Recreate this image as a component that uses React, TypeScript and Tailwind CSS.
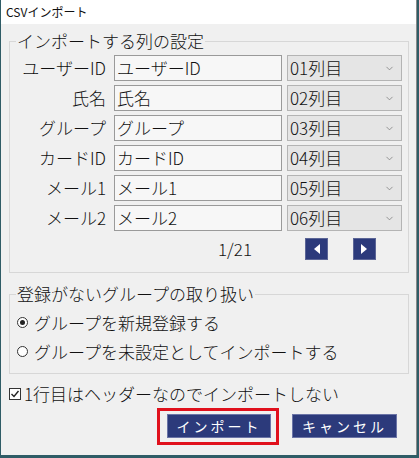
import { ChevronDown } from 'lucide-react';

const jp = "font-['Noto_Sans_CJK_JP','Noto_Sans',sans-serif]";

const rows = [
  { label: 'ユーザーID', col: '01列目' },
  { label: '氏名', col: '02列目' },
  { label: 'グループ', col: '03列目' },
  { label: 'カードID', col: '04列目' },
  { label: 'メール1', col: '05列目' },
  { label: 'メール2', col: '06列目' },
];

const NavButton = ({ dir }: { dir: 'left' | 'right' }) => (
  <button className="flex h-[22px] w-[23px] items-center justify-center border border-[#5b6596] bg-[#2c3a7b]">
    <svg width="7" height="10" viewBox="0 0 7 10">
      {dir === 'left' ? <polygon points="7,0 7,10 1,5" fill="#fff" /> : <polygon points="0,0 0,10 6,5" fill="#fff" />}
    </svg>
  </button>
);

const Radio = ({ checked, label }: { checked?: boolean; label: string }) => (
  <label className="flex h-[29px] items-center">
    <span className="ml-[7px] flex h-[11px] w-[11px] items-center justify-center rounded-full border border-[#333] bg-white">
      {checked && <span className="h-[5px] w-[5px] rounded-full bg-[#222]" />}
    </span>
    <span className="ml-[6px] text-[17px] leading-[20px]">{label}</span>
  </label>
);

export default function App() {
  return (
    <div className={`h-[458px] w-[419px] bg-[#2f5c66] font-light ${jp}`}>
      <div className="ml-[1px] flex h-[455px] w-[416px] flex-col overflow-hidden border-r border-[#8a8a8a] bg-[#f0f0f0] text-[#111]">
        <div className="flex h-[24px] items-center bg-white pl-[5px] text-[12px] font-normal leading-[14px]">CSVインポート</div>
        <div className="flex flex-col pl-[8px] pr-[7px]">
          <fieldset className="mt-[7px] border border-[#d7d7d7] pb-[12px]">
            <legend className="ml-[6px] px-[1px] text-[17px] leading-[20px]">インポートする列の設定</legend>
            <div className="flex flex-col gap-[4px] pt-[4px]">
              {rows.map((r) => (
                <div key={r.label} className="flex h-[26px] items-center">
                  <div className="w-[96px] text-right text-[17px] leading-[20px]">{r.label}</div>
                  <div className="ml-[8px] flex h-[26px] w-[168px] items-center border border-[#9a9a9a] bg-[#f7f7f7] pl-[2px] text-[17px] leading-[20px]">
                    {r.label}
                  </div>
                  <div className="ml-[5px] flex h-[26px] w-[115px] items-center justify-between border border-[#b4b4b4] bg-[#e5e5e5] pl-[2px] pr-[6px] text-[17px] leading-[20px]">
                    <span>{r.col}</span>
                    <ChevronDown size={11} strokeWidth={1.5} className="text-[#707070]" />
                  </div>
                </div>
              ))}
            </div>
            <div className="mt-[7px] flex h-[22px] items-center">
              <div className="ml-[208px] w-[87px] text-[17px] leading-[20px]">1/21</div>
              <NavButton dir="left" />
              <div className="ml-[25px]">
                <NavButton dir="right" />
              </div>
            </div>
          </fieldset>

          <fieldset className="mt-[11px] border border-[#d7d7d7] pb-[7px]">
            <legend className="ml-[6px] px-[1px] text-[17px] leading-[20px]">登録がないグループの取り扱い</legend>
            <div className="flex flex-col pt-[4px]">
              <Radio checked label="グループを新規登録する" />
              <Radio label="グループを未設定としてインポートする" />
            </div>
          </fieldset>

          <label className="mt-[10px] flex h-[20px] items-center">
            <span className="flex h-[12px] w-[12px] items-center justify-center border border-[#333] bg-white">
              <svg width="10" height="10" viewBox="0 0 10 10">
                <polyline points="1.5,5 4,7.5 8.5,2" fill="none" stroke="#222" strokeWidth="1.4" />
              </svg>
            </span>
            <span className="ml-[3px] text-[17px] leading-[20px]">1行目はヘッダーなのでインポートしない</span>
          </label>

          <div className="mt-[10px] flex justify-end gap-[21px] pr-[12px]">
            <div className="relative">
              <button className="flex h-[24px] w-[104px] items-center justify-center border border-[#6b74a6] bg-[#2c3a7b] text-[14px] font-normal leading-[16px] tracking-[3px] text-white">
                インポート
              </button>
              <div className="pointer-events-none absolute -bottom-[7px] -left-[10px] -right-[8px] -top-[6px] border-[3px] border-[#e0101c]" />
            </div>
            <button className="flex h-[24px] w-[105px] items-center justify-center border border-[#6b74a6] bg-[#2c3a7b] text-[14px] font-normal leading-[16px] tracking-[3px] text-white">
              キャンセル
            </button>
          </div>
        </div>
      </div>
    </div>
  );
}
